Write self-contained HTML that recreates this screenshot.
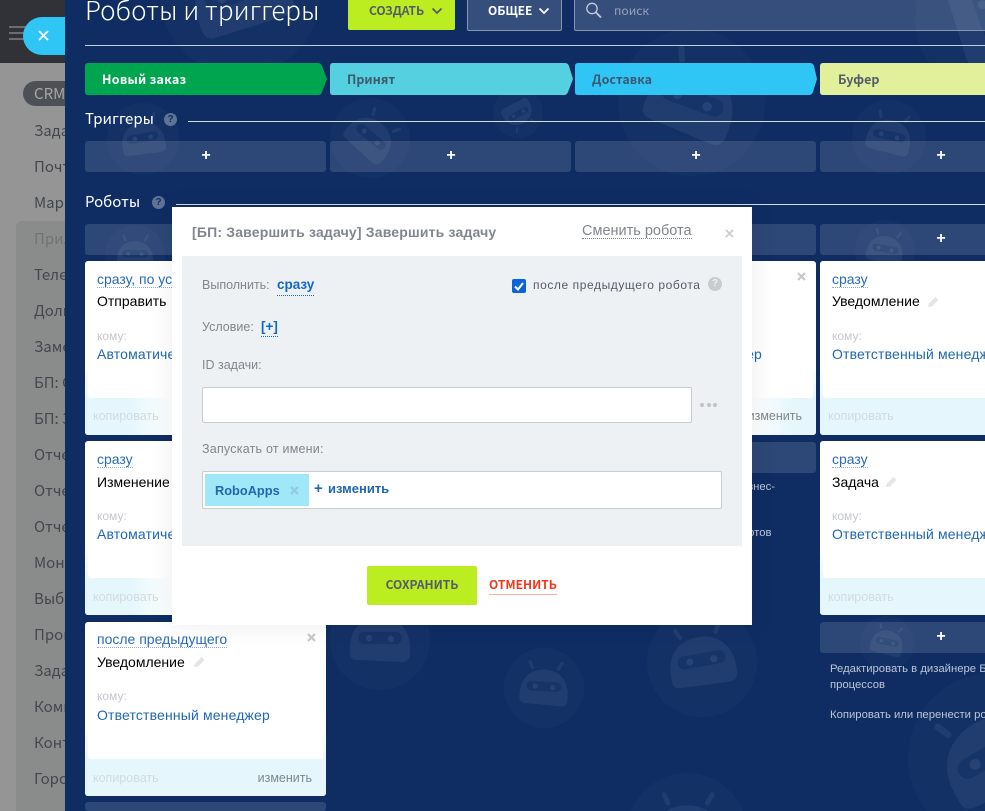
<!DOCTYPE html>
<html lang="ru"><head><meta charset="utf-8"><title>Роботы и триггеры</title>
<style>
html,body{margin:0;padding:0;width:985px;height:811px;overflow:hidden;background:#959595}
body{position:relative;font-family:"Liberation Sans","Noto Sans CJK SC",sans-serif}
.a{position:absolute;white-space:nowrap}
.n{font-family:"Noto Sans CJK SC","Liberation Sans",sans-serif}
#side{position:absolute;left:0;top:0;width:65px;height:811px;background:#959595;overflow:hidden}
#side .t{position:absolute;left:34px;font:15px/20px "Noto Sans CJK SC","Liberation Sans",sans-serif;color:#43474d;white-space:nowrap}
#panel{position:absolute;left:65px;top:0;width:920px;height:811px;background:#0f2d63;overflow:hidden}
#root{position:absolute;left:0;top:0;width:985px;height:811px;overflow:hidden}
.robot{position:absolute}
.add{position:absolute;height:31px;background:rgba(255,255,255,.125);border-radius:3px;color:#fff;text-align:center;font:bold 16px/30px "Liberation Sans",sans-serif;text-indent:1px}
.stage{position:absolute;top:63px;height:32px;font:bold 12.5px/32px "Noto Sans CJK SC","Liberation Sans",sans-serif}
.stage svg{position:absolute;left:0;top:0}
.stage span{position:absolute;top:0;white-space:nowrap}
.card{position:absolute;width:241px;height:174px;border-radius:3px;background:linear-gradient(#fff 60%,#e5f7fd 80%);overflow:hidden}
.card .in{position:absolute;left:3px;right:3px;top:0;height:137px;background:#fff;border-radius:0 0 3px 3px}
.card .ft{position:absolute;left:0;right:0;top:137px;bottom:0;background:#e5f7fd}
.card .a{font-size:14px;line-height:18px}
.dl{color:#2a6ab5;border-bottom:1px dotted #7fb0e0;line-height:16px!important;height:16px}
.nm{color:#000}
.ko{color:#c3c7cd;font-size:12px!important}
.to{color:#2067b0;letter-spacing:.15px}
.cp{color:#d3dade;font-size:12.500px!important}
.ch{color:#80868e;font-size:12.500px!important}
.mt{color:#80868e;font-size:12.500px;line-height:16px}
.hint{position:absolute;font-size:11.300px;line-height:16px;color:#bcc5d4;white-space:nowrap}
.fadeR{position:absolute;top:0;bottom:0;left:47px;width:40px;background:linear-gradient(90deg,rgba(255,255,255,0),#fff)}
.fadeL{position:absolute;top:0;bottom:0;left:177px;width:40px;background:linear-gradient(270deg,rgba(255,255,255,0),#fff)}
</style></head><body>
<svg width="0" height="0" style="position:absolute"><defs>
<g id="r">
<circle cx="50" cy="50" r="50" fill="#fff" fill-opacity=".022"/>
<path fill="#fff" fill-opacity=".06" d="M20 58C20 38 33 27 50 27C67 27 80 38 80 58V64C80 69 77 72 72 72L28 70C23 70 20 68 20 63Z"/>
<path stroke="#fff" stroke-opacity=".06" stroke-width="4" stroke-linecap="round" fill="none" d="M34 25L31 18M67 25L71 18"/>
<rect x="28" y="42" width="44" height="12" rx="6" fill="#0f2d63" fill-opacity=".55"/>
<circle cx="39" cy="48" r="3.200" fill="#fff" fill-opacity=".08"/><circle cx="61" cy="49" r="3.200" fill="#fff" fill-opacity=".08"/>
</g></defs></svg>

<div id="side">
<div style="position:absolute;left:0;top:0;width:65px;height:63px;background:#303238"></div>
<div style="position:absolute;left:16px;top:221px;width:49px;height:590px;background:#8a8c8c;border-radius:6px 0 0 0"></div>
<div style="position:absolute;left:9px;top:26px;width:17px;height:2px;background:#6b6d72;box-shadow:0 6px 0 #6b6d72,0 12px 0 #6b6d72"></div>
<div style="position:absolute;left:23px;top:81px;width:60px;height:25px;border-radius:13px;background:#4d5055"></div>
<div class="t" style="top:84px;color:#a5a7a9">CRM</div>
<div class="t" style="top:121px">Задачи</div><div class="t" style="top:157px">Почта</div><div class="t" style="top:193px">Маркетинг</div>
<div class="t" style="top:229px;color:#6f7276">Приложения</div><div class="t" style="top:265px">Телефония</div><div class="t" style="top:301px">Долг</div>
<div class="t" style="top:337px">Заметки</div><div class="t" style="top:373px">БП: С</div><div class="t" style="top:409px">БП: З</div>
<div class="t" style="top:445px">Отчеты</div><div class="t" style="top:481px">Отчеты</div><div class="t" style="top:517px">Отчеты</div>
<div class="t" style="top:553px">Монитор</div><div class="t" style="top:589px">Выборка</div><div class="t" style="top:625px">Процессы</div>
<div class="t" style="top:661px">Задачи</div><div class="t" style="top:697px">Компании</div><div class="t" style="top:733px">Контакты</div><div class="t" style="top:769px">Города</div>
</div>
<div style="position:absolute;left:23px;top:17px;width:42px;height:38px;background:#2fc6f6;border-radius:19px 0 0 19px"></div>
<svg class="a" style="left:37px;top:29px" width="13" height="13"><path d="M2 2L11 11M11 2L2 11" stroke="#fff" stroke-width="1.800"/></svg>

<div id="panel"></div>
<div id="root">
<svg class="robot" style="left:160px;top:-85px" width="160" height="160" viewBox="0 0 100 100"><use href="#r" transform="rotate(-20 50 50)"/></svg>
<svg class="robot" style="left:107px;top:103px" width="72" height="72" viewBox="0 0 100 100"><use href="#r" transform="rotate(-10 50 50)"/></svg>
<svg class="robot" style="left:330px;top:98px" width="80" height="80" viewBox="0 0 100 100"><use href="#r" transform="rotate(40 50 50)"/></svg>
<svg class="robot" style="left:493px;top:88px" width="50" height="50" viewBox="0 0 100 100"><use href="#r" transform="rotate(150 50 50)"/></svg>
<svg class="robot" style="left:618px;top:29px" width="147" height="147" viewBox="0 0 100 100"><use href="#r" transform="rotate(20 50 50)"/></svg>
<svg class="robot" style="left:852px;top:100px" width="74" height="74" viewBox="0 0 100 100"><use href="#r" transform="rotate(12 50 50)"/></svg>
<svg class="robot" style="left:915px;top:-50px" width="140" height="140" viewBox="0 0 100 100"><use href="#r" transform="rotate(70 50 50)"/></svg>
<svg class="robot" style="left:105px;top:225px" width="60" height="60" viewBox="0 0 100 100"><use href="#r"/></svg>
<svg class="robot" style="left:855px;top:220px" width="60" height="60" viewBox="0 0 100 100"><use href="#r" transform="rotate(10 50 50)"/></svg>
<svg class="robot" style="left:330px;top:590px" width="100" height="100" viewBox="0 0 100 100"><use href="#r"/></svg>
<svg class="robot" style="left:504px;top:648px" width="80" height="80" viewBox="0 0 100 100"><use href="#r" transform="rotate(3 50 50)"/></svg>
<svg class="robot" style="left:647px;top:607px" width="110" height="110" viewBox="0 0 100 100"><use href="#r" transform="rotate(-10 50 50)"/></svg>
<svg class="robot" style="left:627px;top:773px" width="120" height="38" viewBox="0 0 100 31.667"><use href="#r"/></svg>
<svg class="robot" style="left:860px;top:616px" width="54" height="54" viewBox="0 0 100 100"><use href="#r" transform="rotate(12 50 50)"/></svg>
<svg class="robot" style="left:908px;top:673px" width="170" height="138" viewBox="0 0 100 81.176"><use href="#r" transform="rotate(-30 50 50)"/></svg>

<div class="a n" style="left:85px;top:-9px;font-size:26px;line-height:38px;color:#fff;font-weight:300">Роботы и триггеры</div>
<div class="a" style="left:348px;top:-4px;width:107px;height:34px;background:#bbed21;border-radius:2px"></div>
<div class="a n" style="left:369px;top:2px;font-size:12px;font-weight:700;line-height:18px;color:#535c69">СОЗДАТЬ</div>
<svg class="a" style="left:431px;top:7px" width="12" height="9"><path d="M1.500 1.500L6 6L10.500 1.500" fill="none" stroke="#535c69" stroke-width="1.800"/></svg>
<div class="a" style="left:467px;top:-4px;width:93px;height:33px;background:rgba(255,255,255,.16);border:1px solid #8995ad;border-radius:2px"></div>
<div class="a n" style="left:488px;top:2px;font-size:12px;font-weight:700;line-height:18px;color:#fff">ОБЩЕЕ</div>
<svg class="a" style="left:538px;top:7px" width="12" height="9"><path d="M1.500 1.500L6 6L10.500 1.500" fill="none" stroke="#fff" stroke-width="1.800"/></svg>
<div class="a" style="left:574px;top:-4px;width:420px;height:33px;background:rgba(255,255,255,.16);border:1px solid #8995ad;border-radius:2px"></div>
<svg class="a" style="left:585px;top:2px" width="18" height="16"><circle cx="7" cy="6.500" r="5.200" fill="none" stroke="#c4cad6" stroke-width="1.300"/><path d="M11 10.500L16 15.500" stroke="#c4cad6" stroke-width="1.800"/></svg>
<div class="a n" style="left:614px;top:2px;font-size:12px;line-height:18px;color:#98a3b8">поиск</div>
<div class="a" style="left:85px;top:45px;width:900px;height:1px;background:#c5cddb"></div>

<div class="stage" style="left:85px;width:243px;color:#fff"><svg width="243" height="32"><path d="M3 0H233Q236 0 237 3L242 16L237 29Q236 32 233 32H3Q0 32 0 29V3Q0 0 3 0Z" fill="#00a64f"/></svg><span style="left:17px;letter-spacing:.27px">Новый заказ</span></div>
<div class="stage" style="left:330px;width:243px;color:#3f5a6c"><svg width="243" height="32"><path d="M3 0H235Q238 0 239 3L243 16L238 29Q237 32 234 32H3Q0 32 0 29V3Q0 0 3 0Z" fill="#55d0e0"/></svg><span style="left:17px">Принят</span></div>
<div class="stage" style="left:575px;width:243px;color:#3b5a72"><svg width="243" height="32"><path d="M3 0H235Q238 0 239 3L242 16L238 29Q237 32 234 32H3Q0 32 0 29V3Q0 0 3 0Z" fill="#2fc6f6"/></svg><span style="left:17px">Доставка</span></div>
<div class="stage" style="left:820px;width:165px;color:#535c69"><svg width="165" height="32"><path d="M3 0H165V32H3Q0 32 0 29V3Q0 0 3 0Z" fill="#e2f09b"/></svg><span style="left:18px">Буфер</span></div>

<div class="a n" style="left:85px;top:109px;font-size:15px;line-height:20px;color:#fff">Триггеры</div>
<div class="a" style="left:164px;top:113px;width:13px;height:13px;border-radius:50%;background:#5f7397;color:#0f2d63;font:bold 10px/13px 'Liberation Sans',sans-serif;text-align:center">?</div>
<div class="a" style="left:188px;top:121px;width:797px;height:1px;background:#d5dae4"></div>
<div class="add" style="left:85px;top:141px;width:241px">+</div><div class="add" style="left:330px;top:141px;width:241px">+</div><div class="add" style="left:575px;top:141px;width:241px">+</div><div class="add" style="left:820px;top:141px;width:241px">+</div>

<div class="a n" style="left:85px;top:192px;font-size:15px;line-height:20px;color:#fff">Роботы</div>
<div class="a" style="left:152px;top:196px;width:13px;height:13px;border-radius:50%;background:#5f7397;color:#0f2d63;font:bold 10px/13px 'Liberation Sans',sans-serif;text-align:center">?</div>
<div class="a" style="left:176px;top:204px;width:809px;height:1px;background:#d5dae4"></div>
<div class="add" style="left:85px;top:224px;width:241px"></div><div class="add" style="left:575px;top:224px;width:241px"></div><div class="add" style="left:820px;top:224px;width:241px">+</div>

<div class="card" style="left:85px;top:261px"><div class="in"></div><div class="ft"></div><div class="fadeR"></div>
<div class="a dl" style="left:12px;top:10px">сразу, по условию</div><div class="a nm" style="left:12px;top:31px">Отправить</div><div class="a ko" style="left:12px;top:66px">кому:</div><div class="a to" style="left:12px;top:84px">Автоматически</div><div class="a cp" style="left:8px;top:146px">копировать</div></div>
<div class="card" style="left:85px;top:441px"><div class="in"></div><div class="ft"></div><div class="fadeR"></div>
<div class="a dl" style="left:12px;top:10px">сразу</div><div class="a nm" style="left:12px;top:32px">Изменение</div><div class="a ko" style="left:12px;top:66px">кому:</div><div class="a to" style="left:12px;top:84px">Автоматически</div><div class="a cp" style="left:8px;top:147px">копировать</div></div>
<div class="card" style="left:85px;top:622px"><div class="in"></div><div class="ft"></div>
<div class="a dl" style="left:12px;top:9px">после предыдущего</div><div class="a nm" style="left:12px;top:31px">Уведомление</div>
<svg class="a" style="left:108px;top:33px" width="13" height="13"><path d="M1 12L2 8.500L8.500 2L11.500 5L5 11.500Z" fill="#e4e5e6"/></svg>
<div class="a ko" style="left:12px;top:65px">кому:</div><div class="a to" style="left:12px;top:84px">Ответственный менеджер</div><div class="a cp" style="left:8px;top:147px">копировать</div><div class="a ch" style="right:14px;top:147px">изменить</div>
<svg class="a" style="left:222px;top:11px" width="9" height="9"><path d="M1 1L8 8M8 1L1 8" stroke="#c6c9cc" stroke-width="2.200"/></svg></div>
<div class="add" style="left:85px;top:802px;width:241px;height:9px"></div>

<div class="card" style="left:575px;top:261px"><div class="in"></div><div class="ft"></div><div class="fadeL"></div>
<div class="a to" style="left:12px;top:84px;width:175px;text-align:right">Ответственный менеджер</div><div class="a ch" style="right:14px;top:146px">изменить</div>
<svg class="a" style="left:222px;top:11px" width="9" height="9"><path d="M1 1L8 8M8 1L1 8" stroke="#c6c9cc" stroke-width="2.200"/></svg></div>
<div class="add" style="left:575px;top:442px;width:241px"></div>
<div class="hint" style="left:585px;top:479px;width:205px;white-space:normal">Редактировать в дизайнере Бизнес-процессов</div>
<div class="hint" style="left:585px;top:525px">Копировать или перенести роботов</div>

<div class="card" style="left:820px;top:261px"><div class="in" style="right:-80px"></div><div class="ft"></div>
<div class="a dl" style="left:12px;top:10px">сразу</div><div class="a nm" style="left:12px;top:31px">Уведомление</div>
<svg class="a" style="left:107px;top:34px" width="13" height="13"><path d="M1 12L2 8.500L8.500 2L11.500 5L5 11.500Z" fill="#e4e5e6"/></svg>
<div class="a ko" style="left:12px;top:66px">кому:</div><div class="a to" style="left:12px;top:84px">Ответственный менеджер</div><div class="a cp" style="left:8px;top:146px">копировать</div></div>
<div class="card" style="left:820px;top:441px"><div class="in" style="right:-80px"></div><div class="ft"></div>
<div class="a dl" style="left:12px;top:10px">сразу</div><div class="a nm" style="left:12px;top:32px">Задача</div>
<svg class="a" style="left:65px;top:34px" width="13" height="13"><path d="M1 12L2 8.500L8.500 2L11.500 5L5 11.500Z" fill="#e4e5e6"/></svg>
<div class="a ko" style="left:12px;top:66px">кому:</div><div class="a to" style="left:12px;top:84px">Ответственный менеджер</div><div class="a cp" style="left:8px;top:147px">копировать</div></div>
<div class="add" style="left:820px;top:622px;width:241px">+</div>
<div class="hint" style="left:830px;top:661px;width:205px;white-space:normal">Редактировать в дизайнере Бизнес-процессов</div>
<div class="hint" style="left:830px;top:707px">Копировать или перенести роботов</div>

<!-- modal -->
<div class="a" style="left:172px;top:207px;width:580px;height:418px;background:#fff;box-shadow:0 0 24px rgba(0,0,0,.08)"></div>
<div class="a" style="left:182px;top:256px;width:560px;height:290px;background:#eef1f4"></div>
<div class="a" style="left:192px;top:224px;font-size:14px;letter-spacing:.18px;font-weight:700;line-height:16px;color:#80868e">[БП: Завершить задачу] Завершить задачу</div>
<div class="a" style="left:582px;top:223px;font-size:14.500px;line-height:16px;height:15px;color:#80868e;border-bottom:1px dotted #80868e">Сменить робота</div>
<svg class="a" style="left:725px;top:229px" width="9" height="9"><path d="M1 1L8 8M8 1L1 8" stroke="#c9cbce" stroke-width="1.600"/></svg>
<div class="a mt" style="left:202px;top:277px">Выполнить:</div>
<div class="a" style="left:277px;top:277px;font-size:13.500px;font-weight:700;line-height:16px;height:18px;color:#1467c7;border-bottom:1px dotted #1467c7">сразу</div>
<div class="a" style="left:512px;top:279px;width:14px;height:14px;border-radius:2px;background:#0a63d8"></div>
<svg class="a" style="left:512px;top:279px" width="14" height="14"><path d="M3 7.500L6 10.500L11 4" fill="none" stroke="#fff" stroke-width="2"/></svg>
<div class="a" style="left:533px;top:277px;font-size:12px;letter-spacing:.58px;line-height:16px;color:#535c69">после предыдущего робота</div>
<div class="a" style="left:708px;top:277px;width:14px;height:14px;border-radius:50%;background:#c8cccf;color:#eef1f4;font:bold 10px/14px 'Liberation Sans',sans-serif;text-align:center">?</div>
<div class="a mt" style="left:202px;top:319px">Условие:</div>
<div class="a" style="left:261px;top:319px;font-size:13.500px;font-weight:700;line-height:16px;height:17px;color:#1467c7;border-bottom:1px dotted #1467c7">[+]</div>
<div class="a mt" style="left:202px;top:357px">ID задачи:</div>
<div class="a" style="left:202px;top:387px;width:488px;height:34px;background:#fff;border:1px solid #c6cdd3;border-radius:2px"></div>
<div class="a" style="left:700px;top:403px;width:4px;height:4px;border-radius:50%;background:#bfc3c7;box-shadow:7px 0 0 #bfc3c7,13px 0 0 #bfc3c7"></div>
<div class="a mt" style="left:202px;top:441px;letter-spacing:.22px">Запускать от имени:</div>
<div class="a" style="left:202px;top:471px;width:518px;height:36px;background:#fff;border:1px solid #c6cdd3;border-radius:2px"></div>
<div class="a" style="left:205px;top:474px;width:104px;height:32px;background:#a0e7fa"></div>
<div class="a" style="left:215px;top:482px;font-size:12.800px;font-weight:700;line-height:17px;color:#1f67b0">RoboApps</div>
<svg class="a" style="left:290px;top:486px" width="9" height="9"><path d="M1 1L8 8M8 1L1 8" stroke="#8fcbdc" stroke-width="2"/></svg>
<div class="a" style="left:314px;top:480px;font-size:15px;font-weight:700;line-height:17px;color:#1f67b0">+</div>
<div class="a" style="left:328px;top:481px;font-size:13px;font-weight:700;line-height:16px;color:#1f67b0">изменить</div>
<div class="a" style="left:367px;top:566px;width:110px;height:39px;background:#bbed21;border-radius:2px"></div>
<div class="a n" style="left:367px;top:576px;width:110px;text-align:center;font-size:12px;font-weight:700;line-height:18px;color:#535c69">СОХРАНИТЬ</div>
<div class="a n" style="left:489px;top:576px;font-size:12px;font-weight:700;line-height:18px;color:#f1361b;border-bottom:1px solid #fbaea3;height:18px">ОТМЕНИТЬ</div>
</div>
</body></html>
